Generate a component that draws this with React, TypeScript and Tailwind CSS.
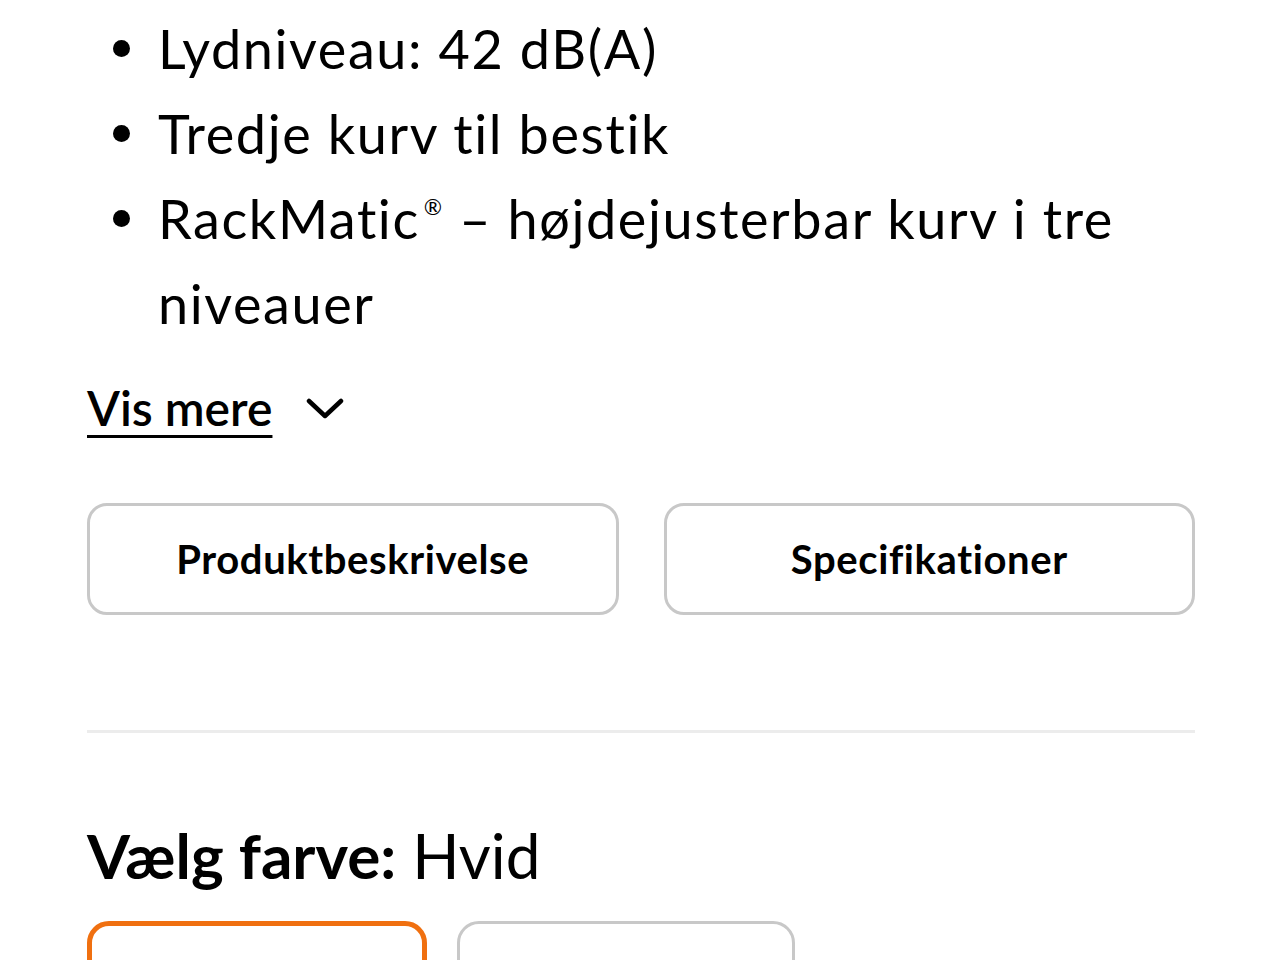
import React from "react";

function Bullet({ children }: { children: React.ReactNode }) {
  return (
    <li className="flex items-start">
      <div className="w-[71px] h-[85px] shrink-0 flex items-center pl-[26px]">
        <div className="w-[17px] h-[17px] rounded-full bg-black" />
      </div>
      <div className="flex-1">{children}</div>
    </li>
  );
}

export default function App() {
  const font = { fontFamily: "Lato, 'Noto Sans', sans-serif" };
  return (
    <div className="w-[1280px] h-[960px] overflow-hidden bg-white text-black" style={font}>
      <div className="pl-[87px] pr-[85px] pt-[6px]">
        <ul className="text-[54px] leading-[85px] tracking-[1.6px]">
          <Bullet>Lydniveau: 42 dB(A)</Bullet>
          <Bullet>Tredje kurv til bestik</Bullet>
          <Bullet>
            RackMatic<span className="align-[24px] text-[22px] leading-none ml-[4px]">®</span> – højdejusterbar kurv i tre niveauer
          </Bullet>
        </ul>
        <div className="mt-[30px] flex items-center gap-[34px] h-[64px]">
          <span className="text-[48px] font-semibold underline underline-offset-[9px] decoration-[3px]">Vis mere</span>
          <svg width="38" height="24" viewBox="0 0 38 24" fill="none" stroke="black" strokeWidth="4.5" strokeLinecap="round" strokeLinejoin="round" className="mt-[2px]">
            <path d="M3 4 L19 19 L35 4" />
          </svg>
        </div>
        <div className="mt-[63px] grid grid-cols-2 gap-[45px]">
          <button className="h-[112px] rounded-[20px] border-[3px] border-[#c8c8c8] text-[40px] font-bold tracking-[0.6px]">Produktbeskrivelse</button>
          <button className="h-[112px] rounded-[20px] border-[3px] border-[#c8c8c8] text-[40px] font-bold tracking-[0.6px]">Specifikationer</button>
        </div>
        <div className="mt-[115px] h-[3px] bg-[#ececec]" />
        <div className="mt-[82px] text-[62px] leading-[80px]">
          <span className="font-bold">Vælg farve:</span> Hvid
        </div>
        <div className="mt-[26px] flex gap-[30px]">
          <div className="w-[340px] h-[100px] rounded-[22px] border-[5px] border-[#f07010]" />
          <div className="w-[338px] h-[100px] rounded-[22px] border-[3px] border-[#c8c8c8]" />
        </div>
      </div>
    </div>
  );
}
